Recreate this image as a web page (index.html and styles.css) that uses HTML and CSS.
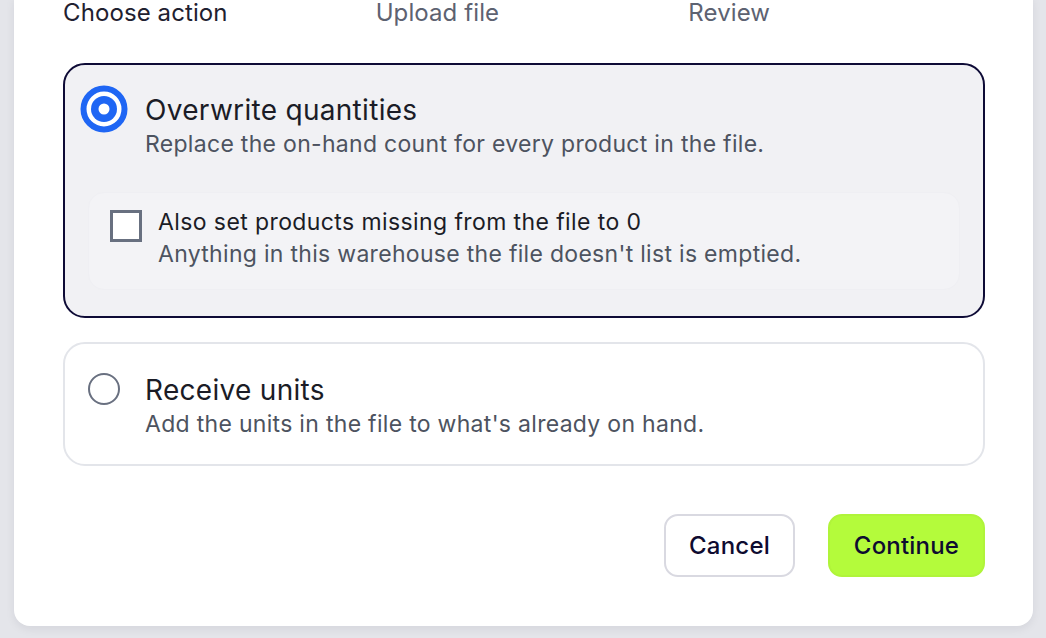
FILE: index.html
```html
<!DOCTYPE html>
<html lang="en">
<head>
<meta charset="utf-8">
<title>Import inventory</title>
<link rel="stylesheet" href="styles.css">
</head>
<body>
<div class="modal">
  <div class="steps">
    <div class="step step-active">Choose action</div>
    <div class="step">Upload file</div>
    <div class="step">Review</div>
  </div>

  <div class="option option-selected">
    <div class="option-row">
      <div class="radio-slot">
        <svg class="radio-on" width="48" height="48" viewBox="0 0 48 48">
          <circle cx="24" cy="24" r="20.5" fill="#ffffff" stroke="#1f66f4" stroke-width="6"/>
          <circle cx="24" cy="24" r="13" fill="#1f66f4"/>
          <circle cx="24" cy="24" r="5.5" fill="#ffffff"/>
        </svg>
      </div>
      <div class="option-text">
        <div class="option-title">Overwrite quantities</div>
        <div class="option-desc">Replace the on-hand count for every product in the file.</div>
      </div>
    </div>
    <div class="suboption">
      <span class="checkbox"></span>
      <div class="option-text">
        <div class="sub-title">Also set products missing from the file to 0</div>
        <div class="option-desc">Anything in this warehouse the file doesn't list is emptied.</div>
      </div>
    </div>
  </div>

  <div class="option option-plain">
    <div class="option-row">
      <div class="radio-slot"><span class="radio-off"></span></div>
      <div class="option-text">
        <div class="option-title">Receive units</div>
        <div class="option-desc">Add the units in the file to what's already on hand.</div>
      </div>
    </div>
  </div>

  <div class="actions">
    <button class="btn btn-secondary">Cancel</button>
    <button class="btn btn-primary">Continue</button>
  </div>
</div>
</body>
</html>
```

FILE: styles.css
```css
* { box-sizing: border-box; }

html, body {
  margin: 0;
  padding: 0;
}

body {
  background: #e4e5ea;
  font-family: "Inter", "Open Sans", sans-serif;
  color: #1b1c26;
  height: 638px;
  overflow: hidden;
}

.modal {
  margin: -3px 13px 0 14px;
  background: #ffffff;
  border-radius: 0 0 16px 16px;
  padding: 0 48px 49px 49px;
  box-shadow: 0 3px 10px rgba(20, 20, 40, 0.07);
}

.steps {
  display: grid;
  grid-template-columns: repeat(3, 1fr);
  gap: 16px;
  font-size: 24px;
  line-height: 32px;
  letter-spacing: 0.1px;
  color: #5d6271;
  margin-bottom: 34px;
}

.step-active { color: #1f2130; }

.option {
  border: 2px solid #e3e5ea;
  border-radius: 22px;
  background: #ffffff;
  padding: 28px 15px 26px 15px;
}

.option + .option { margin-top: 24px; }

.option-selected {
  border-color: #0e0b36;
  background: #f1f1f4;
}

.option-plain {
  padding-top: 29px;
  padding-bottom: 24px;
}

.option-row {
  display: flex;
  align-items: flex-start;
  gap: 17px;
}

.radio-slot {
  width: 48px;
  height: 48px;
  margin-top: -8px;
  flex: none;
  display: flex;
  align-items: center;
  justify-content: center;
}

.radio-on { display: block; }

.radio-off {
  width: 32px;
  height: 32px;
  border-radius: 50%;
  border: 2px solid #697080;
  background: #ffffff;
}

.option-title {
  font-size: 28px;
  line-height: 35px;
  letter-spacing: 0.3px;
  color: #1b1c26;
}

.option-desc {
  font-size: 23px;
  line-height: 32px;
  letter-spacing: 0.3px;
  color: #4d5360;
}

.suboption {
  display: flex;
  align-items: flex-start;
  gap: 16px;
  margin: 32px 8px 0 8px;
  padding: 13px 21px 19px 21px;
  background: #f3f3f6;
  border: 1px solid #efeff3;
  border-radius: 16px;
}

.checkbox {
  flex: none;
  width: 32px;
  height: 32px;
  margin-top: 4px;
  border: 3px solid #687080;
  background: #ffffff;
}

.sub-title {
  font-size: 23px;
  line-height: 32px;
  letter-spacing: 0.4px;
  color: #1b1c26;
}

.actions {
  display: flex;
  justify-content: flex-end;
  gap: 33px;
  margin-top: 48px;
}

.btn {
  font-family: "Inter", sans-serif;
  font-size: 24px;
  font-weight: 500;
  letter-spacing: 0.2px;
  height: 63px;
  border-radius: 14px;
  padding: 0;
  color: #0e0b30;
  cursor: pointer;
}

.btn-secondary {
  background: #ffffff;
  border: 2px solid #d9d9e1;
  width: 131px;
}

.btn-primary {
  background: #b4fb3b;
  border: 2px solid #b0f43a;
  width: 157px;
}
```
